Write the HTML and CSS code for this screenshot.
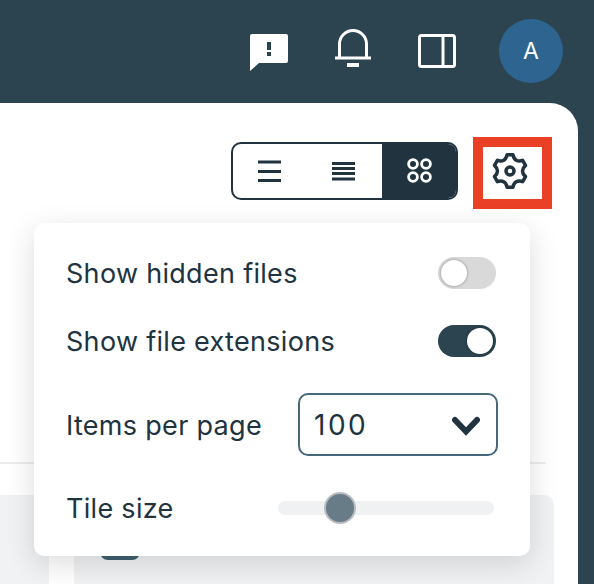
FILE: index.html
```html
<!DOCTYPE html>
<html>
<head>
  <title>Files</title>
  <link rel="stylesheet" href="styles.css">
</head>
<body>
  <header class="topbar">
    <svg class="top-icon" viewBox="0 0 38 48">
      <path class="solid" d="M2 7H36a2 2 0 0 1 2 2V34a2 2 0 0 1-2 2H9L0 44V9a2 2 0 0 1 2-2Z"/>
      <rect class="mark" x="17" y="15" width="4" height="8"/>
      <rect class="mark" x="17" y="25" width="4" height="4"/>
    </svg>
    <svg class="top-icon" viewBox="0 0 38 48">
      <path class="line" d="M5.5 31V17a13.5 13.5 0 0 1 27 0V31M1 31H37"/>
      <rect class="solid" x="13" y="36" width="12" height="4"/>
    </svg>
    <svg class="top-icon" viewBox="0 0 38 48">
      <rect class="line" x="1.5" y="8.5" width="35" height="31" rx="2"/>
      <path class="line" d="M25 8.5V39.5"/>
    </svg>
    <div class="avatar">A</div>
  </header>

  <main class="card">
    <div class="toolbar">
      <div class="views">
        <div class="view">
          <svg viewBox="0 0 24 24"><path d="M0 3H23M0 12.5H23M0 21.5H23"/></svg>
        </div>
        <div class="view">
          <svg viewBox="0 0 24 24"><path d="M0 4.5H23M0 9.5H23M0 14.5H23M0 20H23"/></svg>
        </div>
        <div class="view active">
          <svg viewBox="0 0 26 26">
            <circle cx="6" cy="6" r="4.4"/>
            <circle cx="19" cy="6" r="4.4"/>
            <circle cx="6" cy="19" r="4.4"/>
            <circle cx="19" cy="19" r="4.4"/>
          </svg>
        </div>
      </div>
      <div class="settings">
        <svg viewBox="0 0 36 36">
          <path d="M15.14 1.75L20.87 1.75Q22.75 9.77 30.64 7.39L33.5 12.36Q27.5 18 33.5 23.64L30.64 28.61Q22.75 26.23 20.87 34.25L15.14 34.25Q13.25 26.23 5.36 28.61L2.5 23.64Q8.5 18 2.5 12.36L5.36 7.39Q13.25 9.77 15.14 1.75Z"/>
          <circle cx="18" cy="18" r="4"/>
        </svg>
      </div>
    </div>

    <div class="divider"></div>

    <div class="tiles">
      <div class="tile"></div>
      <div class="tile">
        <div class="badge"></div>
      </div>
    </div>
  </main>

  <div class="popover">
    <div class="row">
      <span class="label">Show hidden files</span>
      <div class="switch"><div class="knob"></div></div>
    </div>
    <div class="row">
      <span class="label">Show file extensions</span>
      <div class="switch on"><div class="knob"></div></div>
    </div>
    <div class="row">
      <span class="label">Items per page</span>
      <div class="select">
        <span class="select-value">100</span>
        <svg viewBox="0 0 28 20"><path d="M3 4L14 15.5L25 4"/></svg>
      </div>
    </div>
    <div class="row">
      <span class="label">Tile size</span>
      <div class="slider"><div class="thumb"></div></div>
    </div>
  </div>
</body>
</html>
```

FILE: styles.css
```css
* {
  box-sizing: border-box;
}

html, body {
  height: 100%;
}

body {
  margin: 0;
  display: flex;
  flex-direction: column;
  overflow: hidden;
  background-color: #2c4350;
  font-family: "Inter", sans-serif;
  color: #20333f;
}

.topbar {
  flex: none;
  height: 103px;
  padding: 0 31px 1px 0;
  display: flex;
  justify-content: flex-end;
  align-items: center;
}

.top-icon {
  width: 38px;
  height: 48px;
  margin-right: 46px;
}

.top-icon:nth-child(3) {
  margin-right: 43px;
}

.top-icon .solid {
  fill: #fff;
}

.top-icon .mark {
  fill: #2c4350;
}

.top-icon .line {
  fill: none;
  stroke: #fff;
  stroke-width: 3;
}

.avatar {
  width: 64px;
  height: 64px;
  border-radius: 50%;
  background-color: #2e6590;
  color: #fff;
  font-size: 23px;
  display: flex;
  align-items: center;
  justify-content: center;
}

.card {
  flex: 1;
  width: 578px;
  padding: 34px 26px 0 0;
  background-color: #fff;
  border-top-right-radius: 28px;
}

.toolbar {
  display: flex;
  justify-content: flex-end;
  align-items: flex-start;
}

.views {
  width: 227px;
  height: 58px;
  margin-top: 5px;
  border: 2px solid #20333f;
  border-radius: 10px;
  overflow: hidden;
  display: flex;
}

.view {
  flex: 1;
  display: flex;
  align-items: center;
  justify-content: center;
}

.view svg {
  width: 24px;
  height: 24px;
  fill: none;
  stroke: #20333f;
  stroke-width: 3;
}

.view.active {
  background-color: #20333f;
}

.view.active svg {
  width: 26px;
  height: 26px;
  margin-left: 3px;
  stroke: #fff;
  stroke-width: 2.8;
}

.settings {
  width: 79px;
  height: 72px;
  margin-left: 15px;
  border: 10px solid #ea4025;
  display: flex;
  align-items: center;
  justify-content: center;
}

.settings svg {
  width: 36px;
  height: 36px;
  margin: -4px 0 0 -5px;
  overflow: visible;
  fill: none;
  stroke: #20333f;
  stroke-width: 3.5;
  stroke-linejoin: round;
}

.divider {
  height: 2px;
  margin: 253px 6px 0 0;
  background-color: #ececec;
}

.tiles {
  margin: 31px -2px 0 0;
  display: grid;
  grid-template-columns: 49px 1fr;
  gap: 25px;
}

.tile {
  height: 89px;
  padding: 35px 0 0 26px;
  background-color: #f1f2f4;
  border-radius: 0 10px 0 0;
}

.badge {
  width: 40px;
  height: 30px;
  border-radius: 8px;
  background-color: #3f6070;
}

.popover {
  position: absolute;
  left: 34px;
  top: 223px;
  width: 496px;
  height: 333px;
  padding: 34px 32px 33px;
  display: flex;
  flex-direction: column;
  gap: 36px;
  background-color: #fff;
  border-radius: 10px;
  box-shadow: 0 8px 30px rgba(0, 0, 0, 0.14);
  font-size: 27px;
  line-height: 30px;
  letter-spacing: 0.3px;
}

.row {
  display: flex;
  justify-content: space-between;
  align-items: center;
}

.label {
  padding-top: 2px;
}

.switch {
  width: 58px;
  height: 32px;
  margin-right: 2px;
  padding: 3px;
  border-radius: 16px;
  background-color: #d9d9d9;
}

.switch.on {
  background-color: #2c4350;
  display: flex;
  justify-content: flex-end;
}

.knob {
  width: 26px;
  height: 26px;
  border-radius: 50%;
  background-color: #fff;
  box-shadow: 0 0 3px rgba(0, 0, 0, 0.4);
}

.select {
  width: 200px;
  height: 63px;
  padding: 0 16px 0 14px;
  display: flex;
  align-items: center;
  justify-content: space-between;
  border: 2px solid #45687a;
  border-radius: 10px;
}

.select-value {
  font-size: 28px;
  letter-spacing: 2.5px;
}

.select svg {
  width: 28px;
  height: 20px;
  margin-top: 3px;
  fill: none;
  stroke: #20333f;
  stroke-width: 6;
  stroke-linecap: round;
  stroke-linejoin: miter;
}

.slider {
  width: 216px;
  height: 14px;
  margin: 9px 4px 9px 0;
  border-radius: 7px;
  background-color: #f0f1f3;
  position: relative;
}

.thumb {
  position: absolute;
  left: 46px;
  top: -9px;
  width: 32px;
  height: 32px;
  border-radius: 50%;
  background-color: #687c88;
  border: 2px solid #b9bdbf;
}
```
